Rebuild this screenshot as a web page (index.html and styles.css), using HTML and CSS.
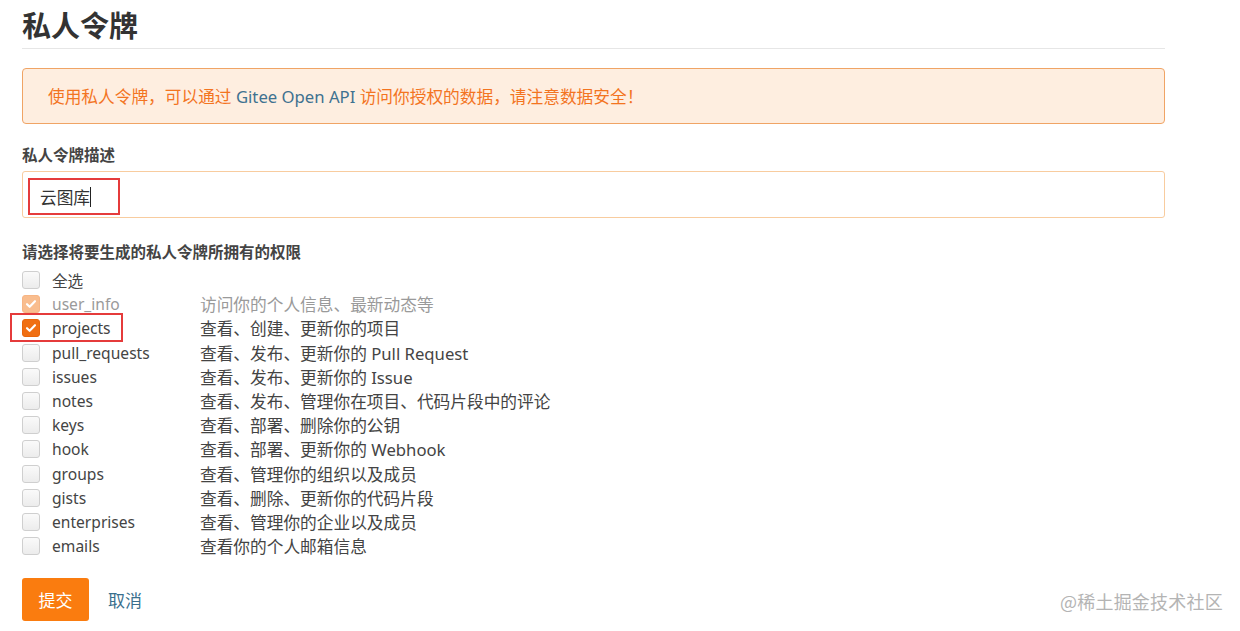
FILE: index.html
```
<!DOCTYPE html>
<html lang="zh">
<head>
<meta charset="utf-8">
<title>私人令牌</title>
<link rel="stylesheet" href="styles.css">
</head>
<body>
<div class="page">
  <h1 class="title">私人令牌</h1>
  <div class="alert">使用私人令牌，可以通过 <span class="link">Gitee Open API</span> 访问你授权的数据，请注意数据安全！</div>
  <div class="label first">私人令牌描述</div>
  <div class="input">
    <span class="mark-box"><span class="value">云图库</span><span class="caret"></span></span>
  </div>
  <div class="label second">请选择将要生成的私人令牌所拥有的权限</div>
  <div class="perms">
    <div class="row"><span class="cb"></span><span class="name">全选</span></div>
    <div class="row muted"><span class="cb checked disabled"><svg viewBox="0 0 18 18"><path d="M4.5 9.2l3 3 6-6.4"/></svg></span><span class="name">user_info</span><span class="desc">访问你的个人信息、最新动态等</span></div>
    <div class="row marked"><span class="cb checked"><svg viewBox="0 0 18 18"><path d="M4.5 9.2l3 3 6-6.4"/></svg></span><span class="name">projects</span><span class="desc">查看、创建、更新你的项目</span><span class="red-mark"></span></div>
    <div class="row"><span class="cb"></span><span class="name">pull_requests</span><span class="desc">查看、发布、更新你的 Pull Request</span></div>
    <div class="row"><span class="cb"></span><span class="name">issues</span><span class="desc">查看、发布、更新你的 Issue</span></div>
    <div class="row"><span class="cb"></span><span class="name">notes</span><span class="desc">查看、发布、管理你在项目、代码片段中的评论</span></div>
    <div class="row"><span class="cb"></span><span class="name">keys</span><span class="desc">查看、部署、删除你的公钥</span></div>
    <div class="row"><span class="cb"></span><span class="name">hook</span><span class="desc">查看、部署、更新你的 Webhook</span></div>
    <div class="row"><span class="cb"></span><span class="name">groups</span><span class="desc">查看、管理你的组织以及成员</span></div>
    <div class="row"><span class="cb"></span><span class="name">gists</span><span class="desc">查看、删除、更新你的代码片段</span></div>
    <div class="row"><span class="cb"></span><span class="name">enterprises</span><span class="desc">查看、管理你的企业以及成员</span></div>
    <div class="row"><span class="cb"></span><span class="name">emails</span><span class="desc">查看你的个人邮箱信息</span></div>
  </div>
  <div class="actions">
    <button class="submit">提交</button>
    <a class="cancel">取消</a>
  </div>
</div>
<div class="watermark">@稀土掘金技术社区</div>
</body>
</html>
```
FILE: styles.css
```
html, body {
  margin: 0;
  padding: 0;
  background: #fff;
}
body {
  font-family: "Noto Sans", "Noto Sans CJK SC", sans-serif;
  color: #444;
  position: relative;
  width: 1240px;
  height: 631px;
  overflow: hidden;
}
.page {
  width: 1143px;
  padding-left: 22px;
}
.title {
  margin: 0;
  padding: 8px 0 4px;
  font-size: 29px;
  line-height: 36px;
  font-weight: 700;
  color: #333;
  border-bottom: 1px solid #e6e6e6;
}
.alert {
  margin-top: 19px;
  height: 54px;
  line-height: 56px;
  border: 1px solid #f0a465;
  border-radius: 4px;
  background: #feeee0;
  color: #f3741f;
  font-size: 16.7px;
  padding-left: 25px;
}
.alert .link {
  color: #3f7290;
}
.label {
  font-size: 15.5px;
  font-weight: 700;
  line-height: 20px;
  color: #444;
}
.label.first {
  margin-top: 21px;
  margin-bottom: 6px;
}
.label.second {
  margin-top: 24px;
  margin-bottom: 6px;
}
.input {
  height: 45px;
  border: 1px solid #f8cc9f;
  border-radius: 3px;
  display: flex;
  align-items: center;
  padding-left: 5px;
}
.mark-box {
  width: 78px;
  height: 33px;
  border: 2px solid #e53b3b;
  display: flex;
  align-items: center;
  padding-left: 10px;
  box-sizing: content-box;
  margin-top: 4px;
}
.value {
  font-size: 16.7px;
  color: #333;
}
.caret {
  width: 1px;
  height: 20px;
  background: #222;
}
.perms {
  display: flex;
  flex-direction: column;
}
.row {
  height: 24.2px;
  display: flex;
  align-items: center;
  font-size: 16px;
  position: relative;
  color: #444;
}
.row.muted {
  color: #9a9a9a;
}
.cb {
  width: 16px;
  height: 16px;
  border: 1px solid #cfcfcf;
  border-radius: 3px;
  background: linear-gradient(#fafafa, #ececec);
  flex: none;
  display: flex;
  align-items: center;
  justify-content: center;
}
.cb.checked {
  background: #f06f13;
  border-color: #e9660b;
}
.cb.checked.disabled {
  background: #f9bd8e;
  border-color: #f7b584;
}
.cb svg {
  width: 16px;
  height: 16px;
}
.cb svg path {
  fill: none;
  stroke: #fff;
  stroke-width: 2.4;
  stroke-linecap: round;
  stroke-linejoin: round;
}
.name {
  margin-left: 12px;
  width: 148px;
  flex: none;
  font-size: 15.6px;
}
.desc {
  white-space: nowrap;
  font-size: 16.7px;
}
.red-mark {
  position: absolute;
  left: -12px;
  top: -3px;
  width: 109px;
  height: 25px;
  border: 2px solid #e53b3b;
}
.actions {
  margin-top: 20px;
  display: flex;
  align-items: center;
  gap: 19px;
}
.submit {
  width: 67px;
  height: 43px;
  border: none;
  border-radius: 3px;
  background: #fa7c0f;
  color: #fff;
  font-family: "Noto Sans CJK SC", sans-serif;
  font-size: 17px;
  padding: 0;
}
.cancel {
  color: #3a6f8d;
  font-size: 17px;
  font-family: "Noto Sans CJK SC", sans-serif;
}
.watermark {
  position: absolute;
  left: 1060px;
  top: 589px;
  font-size: 18px;
  line-height: 24px;
  color: #b4b4b4;
  font-family: "Noto Sans CJK SC", sans-serif;
  letter-spacing: 0.2px;
}
```
